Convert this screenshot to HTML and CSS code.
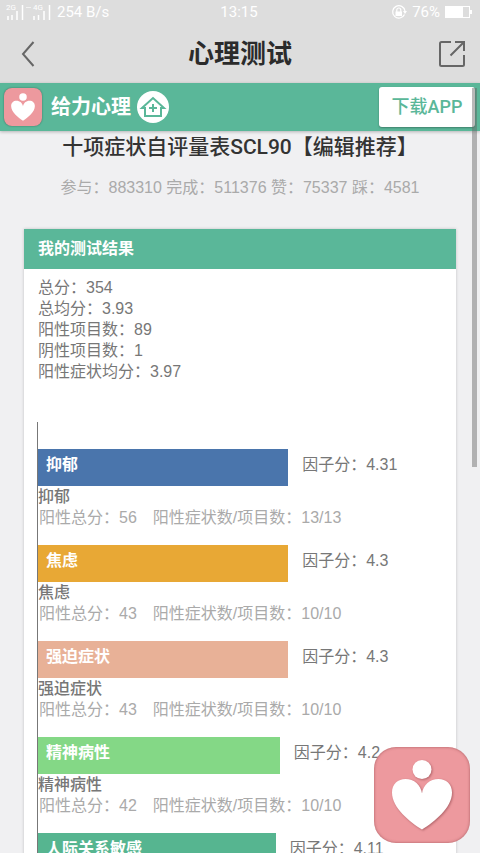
FILE: index.html
```html
<!DOCTYPE html>
<html lang="zh-CN">
<head>
<meta charset="utf-8">
<meta name="viewport" content="width=device-width, initial-scale=1">
<title>心理测试</title>
<link rel="stylesheet" href="styles.css">
</head>
<body>
<svg class="defs" aria-hidden="true">
  <symbol id="heart-person" viewBox="0 0 96 96">
    <circle cx="48" cy="22.500" r="9.500"/>
    <path d="M48 82.500C36 75 18 61 18 45.500C18 37 24 32 31.500 32C40 32 47 38 48 46.500C49 38 56 32 64.500 32C72 32 78 37 78 45.500C78 61 60 75 48 82.500Z"/>
  </symbol>
</svg>
<div class="app">
  <div class="status">
    <div class="status-left">
      <svg class="signal" viewBox="0 0 46 18" aria-hidden="true">
        <g fill="none" stroke="currentColor" stroke-width="1.500">
          <path d="M2 17v-4M6 17v-5M11 17V8M16.500 17V2M28 17v-4M32.500 17v-5M38 17V8M43.500 17V2"/>
          <path d="M20 4.500h5" stroke-width="1" opacity=".6"/>
        </g>
        <text x="0" y="7">2G</text>
        <text x="27" y="7">4G</text>
      </svg>
      <span>254 B/s</span>
    </div>
    <span>13:15</span>
    <div class="status-right">
      <svg class="lock" viewBox="0 0 16 16" aria-hidden="true">
        <path d="M13.500 10.500A6.200 6.200 0 1 1 14 7" fill="none" stroke="currentColor" stroke-width="1.200"/>
        <path d="M12 7h4l-2 3z" fill="currentColor"/>
        <path d="M4.500 7.500h6.500V12H4.500z" fill="currentColor"/>
        <path d="M5.800 8V6a2 2 0 0 1 4 0v2" fill="none" stroke="currentColor" stroke-width="1.200"/>
      </svg>
      <span>76%</span>
      <svg class="battery" viewBox="0 0 27 12" aria-hidden="true">
        <rect x=".5" y=".5" width="24" height="11" fill="none" stroke="currentColor"/>
        <path d="M0 0h18v12H0zM25 4h2v4h-2z" fill="currentColor"/>
      </svg>
    </div>
  </div>
  <header class="navbar">
    <button class="icon-button" type="button" aria-label="返回">
      <svg class="back" viewBox="0 0 14 28" aria-hidden="true"><path d="M12.500 2L2 14l10.500 12"/></svg>
    </button>
    <h1>心理测试</h1>
    <button class="icon-button" type="button" aria-label="分享">
      <svg class="share" viewBox="0 0 28 28" aria-hidden="true"><path d="M13 2H3.500Q2 2 2 3.500v21Q2 26 3.500 26h21q1.500 0 1.500-1.500V15M12.500 15.500L26 2M17 2h9v9"/></svg>
    </button>
  </header>
  <div class="brandbar">
    <svg class="logo" aria-hidden="true"><use href="#heart-person"/></svg>
    <span class="brand">给力心理</span>
    <a class="home" href="#" aria-label="首页">
      <svg viewBox="0 0 32 32" aria-hidden="true"><path d="M5 17L16 7l11 10h-3v8H8v-8zM16 13v8M12 17h8"/></svg>
    </a>
    <a class="download" href="#">下载APP</a>
  </div>
  <main class="content">
    <h2>十项症状自评量表SCL90【编辑推荐】</h2>
    <p class="stats">参与：883310 完成：511376 赞：75337 踩：4581</p>
    <section class="card">
      <h3>我的测试结果</h3>
      <div class="summary">
        <p>总分：354</p>
        <p>总均分：3.93</p>
        <p>阳性项目数：89</p>
        <p>阴性项目数：1</p>
        <p>阳性症状均分：3.97</p>
      </div>
      <div class="chart">
        <div class="factor">
          <div class="line"><div class="bar blue" style="width:60%">抑郁</div><span>因子分：4.31</span></div>
          <p class="name">抑郁</p>
          <p class="detail">阳性总分：56　阳性症状数/项目数：13/13</p>
        </div>
        <div class="factor">
          <div class="line"><div class="bar amber" style="width:60%">焦虑</div><span>因子分：4.3</span></div>
          <p class="name">焦虑</p>
          <p class="detail">阳性总分：43　阳性症状数/项目数：10/10</p>
        </div>
        <div class="factor">
          <div class="line"><div class="bar peach" style="width:60%">强迫症状</div><span>因子分：4.3</span></div>
          <p class="name">强迫症状</p>
          <p class="detail">阳性总分：43　阳性症状数/项目数：10/10</p>
        </div>
        <div class="factor">
          <div class="line"><div class="bar lime" style="width:58%">精神病性</div><span>因子分：4.2</span></div>
          <p class="name">精神病性</p>
          <p class="detail">阳性总分：42　阳性症状数/项目数：10/10</p>
        </div>
        <div class="factor">
          <div class="line"><div class="bar teal" style="width:57%">人际关系敏感</div><span>因子分：4.11</span></div>
        </div>
      </div>
    </section>
  </main>
  <div class="scroll-thumb"></div>
  <button class="floating" type="button" aria-label="给力心理">
    <svg aria-hidden="true"><use href="#heart-person"/></svg>
  </button>
</div>
</body>
</html>
```
FILE: styles.css
```css
* {
  box-sizing: border-box;
}

body {
  margin: 0;
  font: 16px/21px "Liberation Sans", "Noto Sans CJK SC", sans-serif;
  color: #777;
}

h1, h2, h3, p {
  margin: 0;
}

button {
  padding: 0;
  border: 0;
  background: none;
}

svg {
  display: block;
}

.defs {
  position: absolute;
  width: 0;
  height: 0;
}

.app {
  position: relative;
  display: flex;
  flex-direction: column;
  height: 100vh;
  overflow: hidden;
  background: #f0f0f2;
}

.status {
  display: grid;
  grid-template-columns: 1fr auto 1fr;
  align-items: center;
  height: 24px;
  padding: 0 8px 0 6px;
  background: #ddd;
  color: #fff;
  font-family: Roboto, sans-serif;
  font-size: 15px;
}

.status-left,
.status-right {
  display: flex;
  align-items: center;
  gap: 5px;
}

.status-right {
  justify-content: flex-end;
}

.signal {
  width: 46px;
  height: 18px;
}

.signal text {
  font-size: 8px;
  fill: currentColor;
}

.lock {
  width: 16px;
  height: 16px;
}

.battery {
  width: 27px;
  height: 12px;
}

.navbar {
  display: flex;
  align-items: center;
  justify-content: space-between;
  height: 59px;
  padding: 0 12px;
  background: #ddd;
}

.icon-button {
  display: grid;
  place-items: center;
  width: 32px;
  height: 40px;
}

.icon-button svg {
  height: 28px;
  fill: none;
  stroke: #666;
  stroke-width: 2;
}

.back {
  width: 14px;
}

.share {
  width: 28px;
}

h1 {
  font-size: 26px;
  line-height: 40px;
  color: #2b2b2b;
}

.brandbar {
  position: relative;
  display: flex;
  flex-shrink: 0;
  align-items: center;
  height: 48px;
  padding: 0 5px 0 4px;
  background: #5ab799;
  box-shadow: 0 1px 3px rgba(0, 0, 0, .25);
  color: #fff;
}

.logo {
  width: 38px;
  height: 38px;
  border-radius: 8px;
  background: #ed999e;
  box-shadow: 0 0 2px rgba(0, 0, 0, .4);
  fill: #fff;
}

.brand {
  margin: 0 6px 0 9px;
  font-size: 20px;
  font-weight: 700;
}

.home {
  width: 32px;
  height: 32px;
  border-radius: 50%;
  background: #fff;
}

.home svg {
  fill: none;
  stroke: #5ab799;
  stroke-width: 2;
}

.download {
  width: 96px;
  margin-left: auto;
  border-radius: 3px;
  background: #fff;
  box-shadow: 0 1px 2px rgba(0, 0, 0, .3);
  color: #5ab799;
  font-family: Roboto, "Noto Sans CJK SC", sans-serif;
  font-size: 18px;
  font-weight: 500;
  line-height: 40px;
  text-align: center;
  text-decoration: none;
}

.content {
  flex: 1;
  min-height: 0;
  overflow: hidden;
}

h2 {
  font-family: Roboto, "Noto Sans CJK SC", sans-serif;
  font-size: 21px;
  font-weight: 500;
  line-height: 32px;
  text-align: center;
  color: #333;
}

.stats {
  margin: 14px 0 31px;
  text-align: center;
  color: #aaa;
}

.card {
  margin: 0 24px;
  background: #fff;
  box-shadow: 0 0 3px rgba(0, 0, 0, .2);
}

h3 {
  padding: 0 14px;
  background: #5ab799;
  color: #fff;
  font-size: 16px;
  line-height: 40px;
}

.summary {
  padding: 8px 14px 40px;
}

.chart {
  margin: 0 1px 0 13px;
  padding: 27px 0;
  border-left: 1px solid #777;
}

.factor {
  margin-bottom: 17px;
}

.line {
  display: flex;
  align-items: center;
  gap: 14px;
  line-height: 32px;
}

.line span {
  padding-bottom: 5px;
}

.bar {
  height: 37px;
  padding-left: 8px;
  color: #fff;
  font-weight: 700;
}

.blue {
  background: #4a75ac;
}

.amber {
  background: #e8a835;
}

.peach {
  background: #e8b197;
}

.lime {
  background: #84d886;
}

.teal {
  background: #56b590;
}

.name {
  font-weight: 500;
}

.detail {
  padding-left: 1px;
  color: #aaa;
}

.scroll-thumb {
  position: absolute;
  top: 88px;
  right: 3px;
  width: 5px;
  height: 379px;
  background: rgba(100, 100, 100, .45);
}

.floating {
  position: absolute;
  right: 10px;
  bottom: 10px;
  width: 96px;
  height: 96px;
  border-radius: 22px;
  background: #ed999e;
  box-shadow: inset 0 0 3px rgba(120, 50, 55, .6);
}

.floating svg {
  width: 96px;
  height: 96px;
  fill: #fff;
  filter: drop-shadow(1px 1px 1px rgba(120, 50, 55, .5));
}
```
